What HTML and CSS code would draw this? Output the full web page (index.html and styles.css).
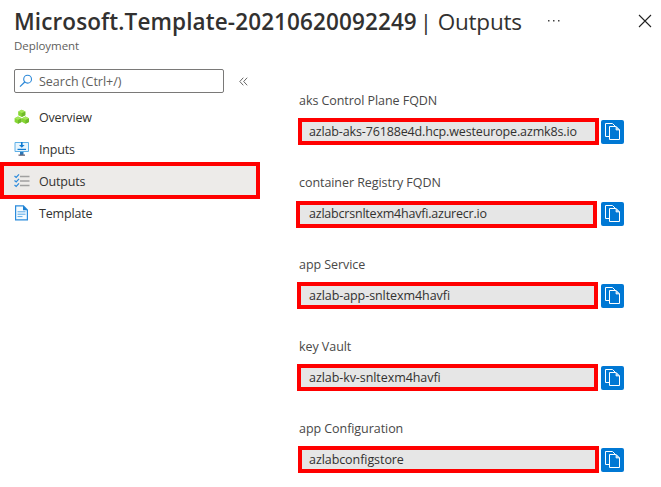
FILE: index.html
```html
<!DOCTYPE html>
<html lang="en">
<head>
<meta charset="utf-8">
<title>Outputs</title>
<link rel="stylesheet" href="styles.css">
</head>
<body>
<svg class="defs" width="0" height="0" aria-hidden="true">
  <symbol id="copy" viewBox="0 0 23 24">
    <path d="M8.500 16.500h-4v-13h7l3 3" fill="none" stroke="#fff"/>
    <path d="M8.500 6.500h6.500l3.500 3.500v9.500h-10z" fill="#0078d4" stroke="#fff"/>
    <path d="M15 6.500v3.500h3.500z" fill="#b5d9f4" stroke="#fff" stroke-width=".7"/>
  </symbol>
</svg>
<header class="header">
  <div class="title-row">
    <h1 class="title"><span class="title-name">Microsoft.Template-20210620092249</span><span class="title-section">| Outputs</span></h1>
    <svg class="more" width="12" height="4" viewBox="0 0 12 4"><path d="M0 1h1.500v1.500H0zM5 1h1.500v1.500H5zM10 1h1.500v1.500H10z" fill="#444"/></svg>
    <svg class="close" width="14" height="14" viewBox="0 0 14 14"><path d="M1 1l12 12M13 1L1 13" stroke="#222" stroke-width="1.1"/></svg>
  </div>
  <p class="subtitle"><span>Deployment</span></p>
</header>
<div class="content">
  <aside class="sidebar">
    <div class="search-row">
      <div class="search">
        <svg width="14" height="14" viewBox="0 0 14 14"><circle cx="8.6" cy="5.2" r="3.9" fill="none" stroke="#2b88d8" stroke-width="1.1"/><path d="M5.800 8L1 12.600" stroke="#2b88d8" stroke-width="1.3"/></svg>
        <span>Search (Ctrl+/)</span>
      </div>
      <svg class="collapse" width="9" height="9" viewBox="0 0 9 9"><path d="M4.300.7L.8 4.500l3.500 3.800M8.200.7L4.700 4.500l3.500 3.800" fill="none" stroke="#555" stroke-width=".9"/></svg>
    </div>
    <nav class="nav">
      <a class="nav-item"><svg width="16" height="16" viewBox="0 0 16 16">
        <path d="M7.700.8l3.600 1.600v3.800L7.700 8 4.200 6.200V2.400zM4 7.600l3.600 1.600V13L4 14.800.6 13V9.200zM11.500 7.600l3.500 1.600V13l-3.500 1.800L8 13V9.200z" fill="#86d633"/>
        <path d="M7.700 4v4l3.600-1.800V2.400zM4 10.800v4L7.600 13V9.200zM11.500 10.800v4L15 13V9.200z" fill="#6fba2a"/>
        <path d="M7.700.8l3.600 1.600L7.700 4 4.200 2.400zM4 7.600l3.600 1.600L4 10.800.6 9.200zM11.500 7.600L15 9.200l-3.500 1.600L8 9.200z" fill="#a4e65a"/></svg><span>Overview</span></a>
      <a class="nav-item"><svg width="16" height="16" viewBox="0 0 16 16">
        <path d="M1 1.500h13.500v9H1z" fill="#e8f5fd" stroke="#5eb0e8"/><path d="M6 11h3.500v3H6z" fill="#2a77b8"/><path d="M4.500 13.500h6.500v1.300H4.500z" fill="#667"/>
        <path d="M7 1h1.600v3h2L7.800 6.700 5 4h2z" fill="#0f7ad1"/><path d="M3.500 7.800h8.500V9H3.500z" fill="#0f7ad1"/></svg><span>Inputs</span></a>
      <a class="nav-item nav-item-active"><svg width="16" height="16" viewBox="0 0 16 16">
        <path d="M6 3.500h9.500M6 8h9.500M6 12.500h9.500" stroke="#a0a0a0" stroke-width="1.300"/><path d="M.5 3l1.700 1.500L5 1.400M.5 7.500L2.200 9 5 5.900M.5 12l1.700 1.500L5 10.400" fill="none" stroke="#2b8bdc" stroke-width="1.200"/></svg><span>Outputs</span></a>
      <a class="nav-item"><svg width="16" height="16" viewBox="0 0 16 16">
        <path d="M1.600.8h7.800L13.400 5v9.800H1.600z" fill="#f4fbff" stroke="#2b8bdc" stroke-width="1.200"/><path d="M9 .5V5.300h4.700z" fill="#1b7fd0"/><path d="M3.500 6.800h8M3.500 9.200h8M3.500 11.600h5" stroke="#5aa9e6"/></svg><span>Template</span></a>
    </nav>
  </aside>
  <main class="outputs">
    <section class="output"><label class="label">aks Control Plane FQDN</label><div class="field-row"><div class="field field-right"><span class="host">azlab-aks-76188e4d.hcp.westeurope.azmk8s.io</span></div><button class="copy"><svg width="23" height="24"><use href="#copy"/></svg></button></div></section>
    <section class="output"><label class="label">container Registry FQDN</label><div class="field-row"><div class="field field-left"><span class="host registry">azlabcrsnltexm4havfi.azurecr.io</span></div><button class="copy"><svg width="23" height="24"><use href="#copy"/></svg></button></div></section>
    <section class="output"><label class="label">app Service</label><div class="field-row"><div class="field"><span>azlab-app-snltexm4havfi</span></div><button class="copy"><svg width="23" height="24"><use href="#copy"/></svg></button></div></section>
    <section class="output"><label class="label">key Vault</label><div class="field-row"><div class="field"><span>azlab-kv-snltexm4havfi</span></div><button class="copy"><svg width="23" height="24"><use href="#copy"/></svg></button></div></section>
    <section class="output"><label class="label">app Configuration</label><div class="field-row"><div class="field field-right"><span>azlabconfigstore</span></div><button class="copy"><svg width="23" height="24"><use href="#copy"/></svg></button></div></section>
  </main>
</div>
</body>
</html>
```
FILE: styles.css
```css
* { box-sizing: border-box; }
body { margin: 0; width: 661px; height: 487px; overflow: hidden; background: #fff; color: #323130; font: 12.5px/18px "Open Sans", "Noto Sans", sans-serif; }
.defs { position: absolute; }
span { white-space: nowrap; }
.header { height: 69px; padding: 5px 9px 0 14px; }
.title-row { display: flex; align-items: center; height: 32px; }
.title { display: flex; gap: 3px; margin: 0; padding-top: 2px; width: 534px; font-size: 22.5px; line-height: 32px; font-weight: 600; }
.title-name { letter-spacing: .11px; }
.title-section { font-weight: 400; letter-spacing: -.2px; }
.close { margin-left: auto; }
.subtitle { margin: 0; font-size: 11.5px; line-height: 18px; letter-spacing: -.06px; color: #605e5c; }
.content { display: flex; }
.sidebar { width: 296px; }
.search-row { display: flex; align-items: center; gap: 15px; padding-left: 14px; }
.search { display: flex; align-items: center; gap: 6px; width: 210px; height: 24px; padding-left: 4px; border: 1px solid #7a7978; border-radius: 2px; color: #605e5c; }
.search span { padding-top: 1px; }
.nav { margin-top: 8px; width: 260px; letter-spacing: -.18px; }
.nav-item { display: flex; align-items: center; gap: 9px; height: 32px; padding-left: 14px; }
.nav-item span { padding-top: 2px; }
.nav-item + .nav-item-active { height: 37px; margin: -3px 0 -2px; padding: 1px 0 0 10px; border: 4px solid #f00; background: #edebe9; }
.outputs { display: grid; grid-template-rows: repeat(5, 82px); padding-top: 22px; }
.label { display: block; height: 27px; padding: 1px 0 0 3px; color: #494847; letter-spacing: -.06px; }
.field-row { display: flex; justify-content: space-between; width: 328px; }
.field { width: 301px; height: 27px; margin-left: 1px; padding: 1px 0 0 8px; border: 4px solid #f00; background: #e6e6e6; line-height: 18px; letter-spacing: -.07px; }
.field-right { margin-left: 2px; padding-left: 7px; }
.field-left { margin: 1px 0 0; padding: 0 0 0 9px; }
.host { letter-spacing: -.14px; }
.registry { letter-spacing: -.21px; }
.copy { width: 23px; height: 24px; margin-top: 2px; padding: 0; border: 0; border-radius: 2px; background: #0078d4; }
.copy svg { display: block; }
```
